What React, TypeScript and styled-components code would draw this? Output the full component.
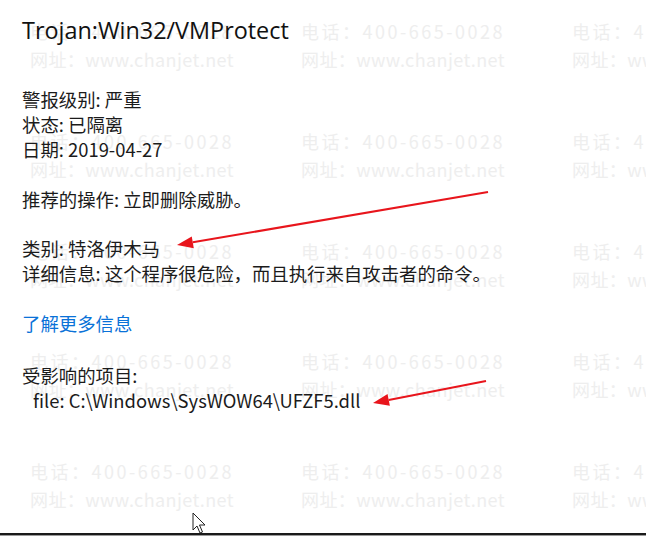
import React from 'react';
import styled, { createGlobalStyle } from 'styled-components';

const GlobalStyle = createGlobalStyle`
  html, body {
    margin: 0;
    padding: 0;
    background: #ffffff;
  }
`;

const Screen = styled.div`
  position: relative;
  width: 646px;
  height: 536px;
  overflow: hidden;
  background: #ffffff;
  display: flex;
  flex-direction: column;
  font-family: "Noto Sans CJK SC", "Noto Sans", sans-serif;
`;

// watermark tiles laid out on a grid behind the dialog text
const Watermark = styled.div`
  position: absolute;
  inset: 0;
  display: grid;
  grid-template-columns: repeat(3, 271px);
  grid-auto-rows: 110px;
  padding: 19px 0 0 30px;
  pointer-events: none;
  z-index: 0;
`;

const Stamp = styled.div`
  display: flex;
  flex-direction: column;
  gap: 3px;
  color: #eeeeee;
  font-size: 18px;
  line-height: 25px;
  white-space: nowrap;
`;

const Phone = styled.span`
  letter-spacing: 2.5px;
`;

const Site = styled.span`
  letter-spacing: 0.4px;
`;

const Panel = styled.div`
  position: relative;
  z-index: 1;
  flex: 1;
  padding: 15px 0 0 22px;
  color: #1b1b1b;
  font-size: 18.4px;
  line-height: 25px;
`;

const Title = styled.h1`
  margin: 0 0 41px;
  font-family: "Open Sans", "Noto Sans", sans-serif;
  font-weight: 400;
  font-size: 23.4px;
  line-height: 31px;
  color: #111111;
`;

const Block = styled.div<{ gap?: number }>`
  margin-top: ${(p) => (p.gap ?? 0)}px;
`;

const Line = styled.div<{ indent?: boolean }>`
  padding-left: ${(p) => (p.indent ? '11px' : '0')};
  white-space: nowrap;
`;

const Link = styled.a`
  color: #0a72d8;
  text-decoration: none;
  cursor: pointer;
`;

const Annotations = styled.svg`
  position: absolute;
  inset: 0;
  z-index: 2;
  pointer-events: none;
`;

const Cursor = styled.svg`
  position: absolute;
  left: 192px;
  top: 512px;
  z-index: 3;
`;

const BottomEdge = styled.div`
  position: relative;
  z-index: 4;
  height: 2px;
  background: #1a1a1a;
  border-bottom: 1px solid #9a9a9a;
`;

const Arrow = ({ x1, y1, x2, y2 }: { x1: number; y1: number; x2: number; y2: number }) => {
  const a = Math.atan2(y2 - y1, x2 - x1);
  const len = 16;
  const half = 6;
  const bx = x2 - Math.cos(a) * len;
  const by = y2 - Math.sin(a) * len;
  const px = -Math.sin(a) * half;
  const py = Math.cos(a) * half;
  return (
    <g>
      <line x1={x1} y1={y1} x2={bx} y2={by} stroke="#e8151c" strokeWidth={2} />
      <polygon points={`${x2},${y2} ${bx + px},${by + py} ${bx - px},${by - py}`} fill="#e8151c" />
    </g>
  );
};

export default function App() {
  const tiles = Array.from({ length: 15 });

  return (
    <>
      <GlobalStyle />
      <Screen>
        <Watermark>
          {tiles.map((_, i) => (
            <Stamp key={i}>
              <Phone>电话：400-665-0028</Phone>
              <Site>网址：www.chanjet.net</Site>
            </Stamp>
          ))}
        </Watermark>

        <Panel>
          <Title>Trojan:Win32/VMProtect</Title>

          <Block>
            <Line>警报级别: 严重</Line>
            <Line>状态: 已隔离</Line>
            <Line>日期: 2019-04-27</Line>
          </Block>

          <Block gap={25}>
            <Line>推荐的操作: 立即删除威胁。</Line>
          </Block>

          <Block gap={24}>
            <Line>类别: 特洛伊木马</Line>
            <Line>详细信息: 这个程序很危险，而且执行来自攻击者的命令。</Line>
          </Block>

          <Block gap={25}>
            <Line>
              <Link>了解更多信息</Link>
            </Line>
          </Block>

          <Block gap={27}>
            <Line>受影响的项目:</Line>
            <Line indent>file: C:\Windows\SysWOW64\UFZF5.dll</Line>
          </Block>
        </Panel>

        <Annotations width={646} height={536} viewBox="0 0 646 536">
          <Arrow x1={488} y1={192} x2={177} y2={245} />
          <Arrow x1={486} y1={381} x2={373} y2={403} />
        </Annotations>

        <Cursor width={16} height={22} viewBox="0 0 16 22">
          <path
            d="M1 1 L1 18 L5 14 L8 21 L10.5 20 L7.5 13 L13 13 Z"
            fill="#ffffff"
            stroke="#222222"
            strokeWidth={1}
            strokeLinejoin="round"
          />
        </Cursor>

        <BottomEdge />
      </Screen>
    </>
  );
}
